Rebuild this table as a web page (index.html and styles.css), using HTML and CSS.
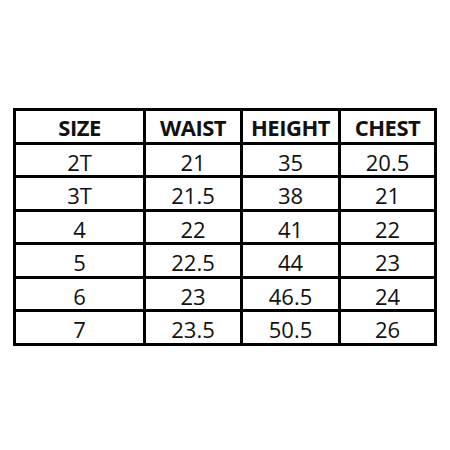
FILE: index.html
```html
<!DOCTYPE html>
<html>
<head>
<meta charset="utf-8">
<link rel="stylesheet" href="styles.css">
</head>
<body>
<div class="chart">
  <div class="cell head">SIZE</div><div class="cell head">WAIST</div><div class="cell head">HEIGHT</div><div class="cell head">CHEST</div>
  <div class="cell">2T</div><div class="cell">21</div><div class="cell">35</div><div class="cell">20.5</div>
  <div class="cell">3T</div><div class="cell">21.5</div><div class="cell">38</div><div class="cell">21</div>
  <div class="cell">4</div><div class="cell">22</div><div class="cell">41</div><div class="cell">22</div>
  <div class="cell">5</div><div class="cell">22.5</div><div class="cell">44</div><div class="cell">23</div>
  <div class="cell">6</div><div class="cell">23</div><div class="cell">46.5</div><div class="cell">24</div>
  <div class="cell">7</div><div class="cell">23.5</div><div class="cell">50.5</div><div class="cell">26</div>
</div>
</body>
</html>
```
FILE: styles.css
```css
html, body {
  margin: 0;
  padding: 0;
  background: #fff;
}
body {
  width: 450px;
  height: 450px;
  font-family: "Open Sans", "Liberation Sans", sans-serif;
}
.chart {
  margin: 108px 0 0 13px;
  width: 424px;
  display: grid;
  grid-template-columns: 127px 94px 95px 93px;
  grid-template-rows: 31px 30px 31px 30px 31px 30px 31px;
  gap: 3px;
  padding: 3px;
  box-sizing: border-box;
  background: #000;
}
.cell {
  background: #fff;
  display: flex;
  align-items: center;
  justify-content: center;
  font-size: 22px;
  color: #111;
  line-height: 1;
  padding-top: 3px;
}
.head {
  font-weight: 700;
  font-size: 22px;
  letter-spacing: -0.5px;
  padding-top: 1px;
}
```
